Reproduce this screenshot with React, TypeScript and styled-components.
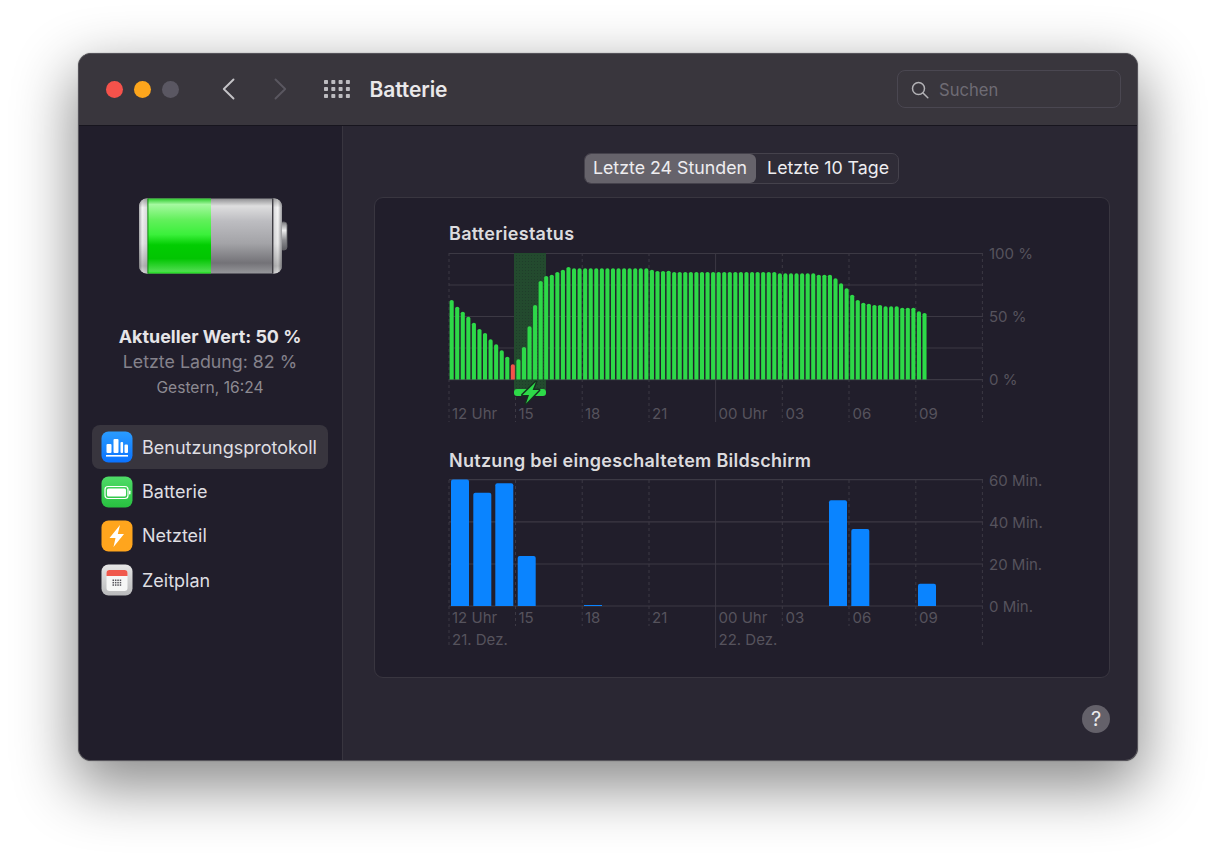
import React from "react";
import styled, { createGlobalStyle } from "styled-components";

const Global = createGlobalStyle`
  html, body { margin: 0; padding: 0; background: #fff; }
  body { font-family: Inter, "Noto Sans", "Liberation Sans", sans-serif; -webkit-font-smoothing: antialiased; }
`;

const Page = styled.div`
  width: 1216px;
  height: 864px;
  padding: 53px 78px 0;
  box-sizing: border-box;
  overflow: hidden;
  background: #fff;
`;
const Window = styled.div`
  width: 1060px;
  height: 708px;
  box-sizing: border-box;
  border-radius: 13px;
  border: 1px solid #55535a;
  overflow: hidden;
  display: flex;
  flex-direction: column;
  background: #2a2733;
  box-shadow: 0 22px 60px 4px rgba(0, 0, 0, 0.46), 0 0 1px rgba(0, 0, 0, 0.6);
`;
const TitleBar = styled.header`
  height: 72px;
  flex: none;
  box-sizing: border-box;
  display: flex;
  align-items: center;
  padding: 0 16px 1px 26.5px;
  background: #39363d;
  border-bottom: 1px solid #17151e;
`;
const Lights = styled.div`
  display: flex;
  gap: 11px;
  margin-right: 43px;
`;
const Light = styled.span<{ $c: string }>`
  width: 17px;
  height: 17px;
  border-radius: 50%;
  background: ${(p) => p.$c};
`;
const NavIcons = styled.div`
  display: flex;
  align-items: center;
  gap: 39px;
  margin-right: 37px;
`;
const Title = styled.h1`
  margin: 0 0 0 20px;
  font-size: 21px;
  font-weight: 600;
  color: #e9e8ea;
  letter-spacing: -0.1px;
`;
const SearchBox = styled.div`
  margin-left: auto;
  width: 224px;
  height: 38px;
  box-sizing: border-box;
  border: 1px solid #4a4751;
  border-radius: 8px;
  display: flex;
  align-items: center;
  gap: 10px;
  padding: 1px 0 0 13px;
  color: #6e6b74;
  font-size: 16.6px;
`;
const Body = styled.div`
  flex: 1;
  display: flex;
  min-height: 0;
`;
const Sidebar = styled.aside`
  width: 264px;
  flex: none;
  box-sizing: border-box;
  background: #211e2b;
  border-right: 1px solid #38353f;
  padding: 72px 14px 0 13px;
  display: flex;
  flex-direction: column;
  align-items: stretch;
`;
const BatteryWrap = styled.div`
  display: flex;
  padding-left: 47px;
  height: 77px;
`;
const Status = styled.div`
  margin-top: 50px;
  text-align: center;
  margin-left: 5px;
  margin-right: 5px;
`;
const StatusMain = styled.div`
  font-size: 17.9px;
  font-weight: 700;
  line-height: 24px;
  color: #e6e5e8;
`;
const StatusSub = styled.div`
  font-size: 17.8px;
  line-height: 26px;
  color: #85828b;
`;
const StatusDate = styled.div`
  font-size: 15.6px;
  line-height: 26px;
  color: #8d8a92;
`;
const Nav = styled.nav`
  margin-top: 24px;
  display: flex;
  flex-direction: column;
`;
const NavItem = styled.div<{ $active?: boolean }>`
  height: 44.4px;
  box-sizing: border-box;
  display: flex;
  align-items: center;
  gap: 9px;
  padding-left: 9px;
  border-radius: 8px;
  font-size: 18px;
  color: #dfdee2;
  background: ${(p) => (p.$active ? "#38353e" : "transparent")};
`;
const Content = styled.main`
  flex: 1;
  min-width: 0;
  display: flex;
  flex-direction: column;
  padding: 27px 28px 0 31px;
`;
const Segmented = styled.div`
  align-self: center;
  display: flex;
  height: 31px;
  box-sizing: border-box;
  border: 1px solid #45424c;
  border-radius: 7px;
  background: #2f2c37;
`;
const Segment = styled.div<{ $active?: boolean }>`
  height: 29px;
  line-height: 28px;
  box-sizing: border-box;
  padding: 0 9px 0 ${(p) => (p.$active ? 8 : 11)}px;
  border-radius: 6px;
  font-size: 17.8px;
  color: #eeedf0;
  background: ${(p) => (p.$active ? "#66636b" : "transparent")};
`;
const Panel = styled.section`
  margin-top: 13px;
  width: 736px;
  height: 481px;
  box-sizing: border-box;
  border: 1px solid #393640;
  border-radius: 9px;
  background: #211e2b;
  padding: 25px 0 0 74px;
`;
const ChartTitle = styled.h2`
  margin: 0;
  font-size: 18px;
  line-height: 22px;
  font-weight: 600;
  letter-spacing: 0.28px;
  color: #dcdbde;
`;
const ChartSvg = styled.svg`
  display: block;
  margin: -2px 0 25px -9px;
`;
const Axis = styled.text`
  font-family: Inter, "Noto Sans", "Liberation Sans", sans-serif;
  font-size: 15px;
  fill: #56535d;
`;
const HelpRow = styled.div`
  display: flex;
  justify-content: flex-end;
  margin-top: 27px;
`;
const Help = styled.div`
  width: 28px;
  height: 28px;
  margin-right: -1px;
  border-radius: 50%;
  background: #64616a;
  color: #ecebee;
  font-size: 20px;
  font-weight: 400;
  line-height: 28px;
  text-align: center;
`;

const GRID = "#3c3944";
const GREEN = "#2dd948";
const XS = [449, 515.5, 582.2, 649, 715.6, 782.3, 849, 915.8, 982.4];
const HOURS: [string, number][] = [
  ["12 Uhr", 452], ["15", 518.5], ["18", 585], ["21", 652], ["00 Uhr", 718.5], ["03", 785.5], ["06", 852.5], ["09", 919],
];

const flat = (v: number, n: number) => Array(n).fill(v);
const TOPS: number[] = [
  240, 260, 275, 290, 308, 327, 339, 358, 373, 391, 410, 433, 418, 381, 319, 255, 183, 168, 164, 156, 149, 141,
  ...flat(145, 14), 149, 153, 153, 152, ...flat(156, 19), ...flat(160, 7), 164, 164, 164, 175, 190, 205, 224, 240,
  248, 251, 255, 255, 259, 259, 259, 263, 263, 263, 274, 279,
];

const BatteryChart = () => (
  <ChartSvg width={620} height={182} viewBox="440 243 620 182">
    <defs>
      <pattern id="dots" width="3" height="3" patternUnits="userSpaceOnUse">
        <rect width="3" height="3" fill="#234a2e" />
        <rect width="1" height="1" fill="#1f3d2a" />
      </pattern>
    </defs>
    {[253.5, 285, 316.5, 348, 379.7].map((y) => (
      <line key={y} x1={449} x2={983} y1={y} y2={y} stroke={GRID} strokeWidth={1.2} />
    ))}
    {XS.map((x) => (
      <line key={x} x1={x} x2={x} y1={253} y2={422} stroke={GRID} strokeWidth={1} strokeDasharray={x === 715.6 ? undefined : "3 3"} />
    ))}
    <rect x={514} y={253} width={32} height={137} fill="url(#dots)" />
    {TOPS.map((t, i) => {
      const x = 449.6 + 5.563 * i;
      const y = 220 + t / 3;
      return (
        <path
          key={i}
          d={`M${x} 379.4V${y + 1.6}a2.05 1.6 0 0 1 4.1 0V379.4Z`}
          fill={i === 11 ? "#f4524a" : GREEN}
        />
      );
    })}
    <rect x={514} y={389} width={32} height={7} rx={3} fill={GREEN} />
    <polygon
      points="535.8,382 522.5,395 529,395 526,403.5 539,390 532.6,390"
      fill={GREEN}
      stroke="#16301f"
      strokeWidth={3}
      strokeLinejoin="round"
      paintOrder="stroke"
    />
    {HOURS.map(([s, x]) => (
      <Axis key={s} x={x} y={419}>{s}</Axis>
    ))}
    <Axis x={989} y={259}>100 %</Axis>
    <Axis x={989} y={322}>50 %</Axis>
    <Axis x={989} y={385}>0 %</Axis>
  </ChartSvg>
);

const BLUE: [number, number][] = [
  [451, 479.5], [473.3, 492.7], [495.3, 483.3], [517.7, 556], [584, 605], [829, 500.3], [851.3, 529], [918, 583.7],
];

const UsageChart = () => (
  <ChartSvg width={620} height={183} viewBox="440 470 620 183">
    {[479.7, 521.8, 564, 606].map((y) => (
      <line key={y} x1={449} x2={983} y1={y} y2={y} stroke={GRID} strokeWidth={1.2} />
    ))}
    {XS.map((x) => {
      const long = x === 449 || x === 715.6 || x === 982.4;
      return (
        <line key={x} x1={x} x2={x} y1={480} y2={long ? 648 : 626} stroke={GRID} strokeWidth={1} strokeDasharray={x === 715.6 ? undefined : "3 3"} />
      );
    })}
    {BLUE.map(([x, y]) => (
      <path
        key={x}
        d={y > 600 ? `M${x} 606V${y}H${x + 18}V606Z` : `M${x} 606V${y + 2}q0 -2 2 -2H${x + 16}q2 0 2 2V606Z`}
        fill="#0a84ff"
      />
    ))}
    {HOURS.map(([s, x]) => (
      <Axis key={s} x={x} y={623}>{s}</Axis>
    ))}
    <Axis x={452} y={645}>21. Dez.</Axis>
    <Axis x={718.5} y={645}>22. Dez.</Axis>
    <Axis x={989} y={486}>60 Min.</Axis>
    <Axis x={989} y={528}>40 Min.</Axis>
    <Axis x={989} y={570}>20 Min.</Axis>
    <Axis x={989} y={612}>0 Min.</Axis>
  </ChartSvg>
);

const BigBattery = () => (
  <svg width={150} height={77} viewBox="0 0 150 77">
    <defs>
      <linearGradient id="cap" x1="0" y1="0" x2="1" y2="0">
        <stop offset="0" stopColor="#a8a8ac" />
        <stop offset="0.35" stopColor="#f4f4f4" />
        <stop offset="1" stopColor="#d4d4d6" />
      </linearGradient>
      <linearGradient id="capR" x1="0" y1="0" x2="1" y2="0">
        <stop offset="0" stopColor="#d8d8da" />
        <stop offset="0.55" stopColor="#f6f6f6" />
        <stop offset="1" stopColor="#9a9a9e" />
      </linearGradient>
      <linearGradient id="capShade" x1="0" y1="0" x2="0" y2="1">
        <stop offset="0" stopColor="#000" stopOpacity="0.3" />
        <stop offset="0.12" stopColor="#000" stopOpacity="0" />
        <stop offset="0.6" stopColor="#000" stopOpacity="0.05" />
        <stop offset="0.9" stopColor="#000" stopOpacity="0.25" />
        <stop offset="1" stopColor="#000" stopOpacity="0.1" />
      </linearGradient>
      <linearGradient id="grey" x1="0" y1="0" x2="0" y2="1">
        <stop offset="0" stopColor="#8f8f92" />
        <stop offset="0.1" stopColor="#dededf" />
        <stop offset="0.3" stopColor="#bdbdc1" />
        <stop offset="0.6" stopColor="#a3a3a7" />
        <stop offset="0.86" stopColor="#737277" />
        <stop offset="1" stopColor="#97979b" />
      </linearGradient>
      <linearGradient id="green" x1="0" y1="0" x2="0" y2="1">
        <stop offset="0" stopColor="#2cc92c" />
        <stop offset="0.08" stopColor="#a5f9a0" />
        <stop offset="0.28" stopColor="#63f05c" />
        <stop offset="0.48" stopColor="#3bf03b" />
        <stop offset="0.62" stopColor="#02cd02" />
        <stop offset="0.8" stopColor="#02c502" />
        <stop offset="0.97" stopColor="#4fdd4f" />
        <stop offset="1" stopColor="#12e012" />
      </linearGradient>
      <linearGradient id="nub" x1="0" y1="0" x2="0" y2="1">
        <stop offset="0" stopColor="#77777b" />
        <stop offset="0.3" stopColor="#efeff0" />
        <stop offset="0.65" stopColor="#8c8c90" />
        <stop offset="1" stopColor="#5d5d62" />
      </linearGradient>
    </defs>
    <rect x={141} y={24} width={7} height={28} rx={3} fill="url(#nub)" stroke="#66656a" strokeWidth={0.8} />
    <rect x={0} y={0.5} width={143} height={75} rx={8} fill="url(#grey)" />
    <path d="M9 0.5H8a8 8 0 0 0 -8 8V67.5a8 8 0 0 0 8 8H9Z" fill="url(#cap)" />
    <path d="M9 0.5H8a8 8 0 0 0 -8 8V67.5a8 8 0 0 0 8 8H9Z" fill="url(#capShade)" />
    <path d="M134 0.5H135a8 8 0 0 1 8 8V67.5a8 8 0 0 1 -8 8H134Z" fill="url(#capR)" />
    <path d="M134 0.5H135a8 8 0 0 1 8 8V67.5a8 8 0 0 1 -8 8H134Z" fill="url(#capShade)" />
    <rect x={9} y={0.5} width={63} height={75} fill="url(#green)" />
    <rect x={8.4} y={0.5} width={1} height={75} fill="#0b8a0b" />
    <rect x={133} y={0.5} width={1.4} height={75} fill="#3f3e44" />
  </svg>
);

const Chip = styled.svg`
  flex: none;
  display: block;
`;
const BlueIcon = () => (
  <Chip width={32} height={32} viewBox="0 0 32 32">
    <defs>
      <linearGradient id="bl" x1="0" y1="0" x2="0" y2="1">
        <stop offset="0" stopColor="#2a9cff" />
        <stop offset="1" stopColor="#0a72ff" />
      </linearGradient>
    </defs>
    <rect x={0.5} y={0.5} width={31} height={31} rx={7} fill="url(#bl)" />
    <rect x={5.5} y={13} width={5} height={9} rx={1} fill="#fff" />
    <rect x={12.5} y={8} width={5} height={14} rx={1} fill="#fff" />
    <rect x={19.5} y={11} width={2.6} height={11} rx={1} fill="#fff" />
    <rect x={23.5} y={13.5} width={3.5} height={8.5} rx={1} fill="#fff" />
    <rect x={5} y={24} width={22} height={1.6} fill="#fff" />
  </Chip>
);
const GreenIcon = () => (
  <Chip width={32} height={32} viewBox="0 0 32 32">
    <defs>
      <linearGradient id="gr" x1="0" y1="0" x2="0" y2="1">
        <stop offset="0" stopColor="#4fdc68" />
        <stop offset="1" stopColor="#28c040" />
      </linearGradient>
    </defs>
    <rect x={0.5} y={0.5} width={31} height={31} rx={7} fill="url(#gr)" />
    <rect x={4} y={10.5} width={23} height={12} rx={3} fill="none" stroke="#fff" strokeWidth={1.2} />
    <rect x={6} y={12.5} width={19} height={8} rx={1.5} fill="#fff" />
    <rect x={28} y={14.5} width={1.5} height={4} rx={0.7} fill="#fff" />
  </Chip>
);
const OrangeIcon = () => (
  <Chip width={32} height={32} viewBox="0 0 32 32">
    <rect x={0.5} y={0.5} width={31} height={31} rx={7} fill="#ffa51d" />
    <polygon points="19,5 8.5,18 14.5,18 12.5,27 23,14 16.8,14" fill="#fff" />
  </Chip>
);
const CalendarIcon = () => (
  <Chip width={32} height={32} viewBox="0 0 32 32">
    <defs>
      <linearGradient id="cg" x1="0" y1="0" x2="0" y2="1">
        <stop offset="0" stopColor="#e6e6e6" />
        <stop offset="1" stopColor="#b9b9bb" />
      </linearGradient>
    </defs>
    <rect x={0.5} y={0.5} width={31} height={31} rx={7} fill="url(#cg)" />
    <rect x={5.5} y={6} width={21} height={21} rx={3} fill="#f6f6f6" />
    <path d="M5.5 12V9a3 3 0 0 1 3 -3h15a3 3 0 0 1 3 3v3Z" fill="#f0584c" />
    {[0, 1, 2, 3].map((c) =>
      [0, 1, 2].map((r) => (
        <rect key={`${c}-${r}`} x={11.5 + c * 2.4} y={15.5 + r * 2.4} width={1.5} height={1.5} fill="#55535a" />
      ))
    )}
  </Chip>
);

const AppGrid = () => (
  <svg width={26} height={18} viewBox="0 0 26 18" fill="#bdbcc0">
    {[0, 1, 2, 3].map((c) =>
      [0, 1, 2].map((r) => <rect key={`${c}${r}`} x={c * 7.3} y={r * 7} width={4} height={4} rx={0.8} />)
    )}
  </svg>
);

const Chevron = ({ dir, color }: { dir: "l" | "r"; color: string }) => (
  <svg width={13} height={22} viewBox="0 0 13 22" fill="none">
    <polyline
      points={dir === "l" ? "11.5,1.5 1.8,11 11.5,20.5" : "1.5,1.5 11.2,11 1.5,20.5"}
      stroke={color}
      strokeWidth={1.9}
      strokeLinecap="round"
      strokeLinejoin="round"
    />
  </svg>
);

export default function App() {
  return (
    <>
      <Global />
      <Page>
        <Window>
          <TitleBar>
            <Lights>
              <Light $c="#f5524b" />
              <Light $c="#fca51c" />
              <Light $c="#5a5762" />
            </Lights>
            <NavIcons>
              <Chevron dir="l" color="#c4c3c7" />
              <Chevron dir="r" color="#5a5760" />
            </NavIcons>
            <AppGrid />
            <Title>Batterie</Title>
            <SearchBox>
              <svg width={18} height={18} viewBox="0 0 18 18" fill="none" stroke="#b3b2b6" strokeWidth={1.5} strokeLinecap="round">
                <circle cx={7.5} cy={7.5} r={6} />
                <line x1={12} y1={12} x2={16.8} y2={16.8} />
              </svg>
              Suchen
            </SearchBox>
          </TitleBar>
          <Body>
            <Sidebar>
              <BatteryWrap>
                <BigBattery />
              </BatteryWrap>
              <Status>
                <StatusMain>Aktueller Wert: 50 %</StatusMain>
                <StatusSub>Letzte Ladung: 82 %</StatusSub>
                <StatusDate>Gestern, 16:24</StatusDate>
              </Status>
              <Nav>
                <NavItem $active><BlueIcon />Benutzungsprotokoll</NavItem>
                <NavItem><GreenIcon />Batterie</NavItem>
                <NavItem><OrangeIcon />Netzteil</NavItem>
                <NavItem><CalendarIcon />Zeitplan</NavItem>
              </Nav>
            </Sidebar>
            <Content>
              <Segmented>
                <Segment $active>Letzte 24 Stunden</Segment>
                <Segment>Letzte 10 Tage</Segment>
              </Segmented>
              <Panel>
                <ChartTitle>Batteriestatus</ChartTitle>
                <BatteryChart />
                <ChartTitle>Nutzung bei eingeschaltetem Bildschirm</ChartTitle>
                <UsageChart />
              </Panel>
              <HelpRow>
                <Help>?</Help>
              </HelpRow>
            </Content>
          </Body>
        </Window>
      </Page>
    </>
  );
}
